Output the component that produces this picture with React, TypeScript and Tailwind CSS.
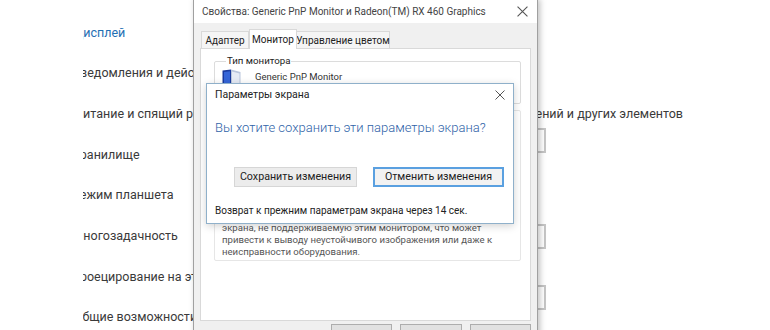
const font = { fontFamily: 'Roboto, "Noto Sans", sans-serif' };

const navItems = [
  { text: "ча", cut: 0, first: true },
  { text: "Дисплей", cut: 9.2, active: true },
  { text: "Уведомления и действия", cut: 10.6 },
  { text: "Питание и спящий режим", cut: 8.8 },
  { text: "Хранилище", cut: 11 },
  { text: "Режим планшета", cut: 11 },
  { text: "Многозадачность", cut: 10.6 },
  { text: "Проецирование на этот компьютер", cut: 12 },
  { text: "Общие возможности", cut: 9.2 },
];

function Chevron() {
  return (
    <svg width="11" height="6" viewBox="0 0 11 6" fill="none">
      <path d="M0.5 0.5 L5.5 5.5 L10.5 0.5" stroke="#8a8a8a" strokeWidth="1" />
    </svg>
  );
}

function Select() {
  return (
    <div className="flex h-[25px] w-[263px] items-center justify-end border-2 border-[#c6c6c6] pr-[6px]">
      <Chevron />
    </div>
  );
}

function SettingsPage() {
  return (
    <div className="flex">
      <div className="ml-[83px] w-[200px] shrink-0 overflow-hidden">
        <div className="mt-[-21px] flex flex-col">
          {navItems.map((item) => (
            <div
              key={item.text}
              className={`flex items-center whitespace-nowrap text-[12.5px] ${
                item.first ? "h-[33.7px]" : "h-[40.7px]"
              } ${item.active ? "text-[#1f70b4]" : "text-[#3a3a3a]"}`}
            >
              <span style={{ marginLeft: -item.cut }}>{item.text}</span>
            </div>
          ))}
        </div>
      </div>
      <div className="flex w-[400px] flex-col pt-[104px]">
        <div className="flex h-[20px] items-center justify-end text-[12.5px] text-[#3a3a3a]">
          <span className="shrink-0 whitespace-nowrap">
            Изменение размера текста, приложений и других элементов
          </span>
        </div>
        <div className="mt-[4px]">
          <Select />
        </div>
        <div className="mt-[71px]">
          <Select />
        </div>
        <div className="mt-[36px]">
          <Select />
        </div>
      </div>
    </div>
  );
}

function MonitorIcon() {
  return (
    <svg width="19" height="17" viewBox="0 0 19 17">
      <path d="M0.5 1.5 L9 0.5 L9 15.5 L0.5 16.5 Z" fill="#1a3a9e" />
      <path d="M2 3 L8 2.2 L8 14 L2 15 Z" fill="#3565d8" />
      <path d="M9 0.5 L18.5 3 L18.5 15.5 L9 15.5 Z" fill="#b9c5dc" />
      <path d="M10 2.5 L17.5 4.5 L17.5 14 L10 14 Z" fill="#e6ebf5" />
    </svg>
  );
}

function CloseX({ size = 10, color = "#444" }: { size?: number; color?: string }) {
  return (
    <svg width={size} height={size} viewBox="0 0 10 10">
      <path d="M0.5 0.5 L9.5 9.5 M9.5 0.5 L0.5 9.5" stroke={color} strokeWidth="1" />
    </svg>
  );
}

function PropertiesWindow() {
  return (
    <div className="absolute left-[193px] top-[-1px] flex h-[360px] w-[345px] flex-col border border-[#a0a0a0] bg-[#f0f0f0] shadow-[2px_0_6px_rgba(0,0,0,0.25)]">
      <div className="flex h-[23px] shrink-0 items-center justify-between whitespace-nowrap bg-white pl-[8px] pr-[9px]">
        <span className="text-[10px] text-[#444]">
          Свойства: Generic PnP Monitor и Radeon(TM) RX 460 Graphics
        </span>
        <CloseX size={11} color="#555" />
      </div>
      <div className="flex flex-col px-[6px]">
        <div className="mt-[6px] flex h-[19px] items-end whitespace-nowrap pl-[1px] text-[10px] text-[#222]">
          <div className="flex h-[17px] w-[48px] items-center justify-center border border-b-0 border-[#d9d9d9] bg-[#f5f5f5]">
            Адаптер
          </div>
          <div className="relative z-10 -mb-px flex h-[20px] w-[48px] items-center justify-center border border-b-0 border-[#d9d9d9] bg-white">
            Монитор
          </div>
          <div className="flex h-[17px] w-[93px] items-center justify-center border border-b-0 border-l-0 border-[#d9d9d9] bg-[#f5f5f5]">
            Управление цветом
          </div>
        </div>
        <div className="flex h-[273px] w-[331px] flex-col border border-[#d9d9d9] bg-white pl-[13px] pr-[9px] pt-[5px]">
          <fieldset className="h-[50px] rounded-[2px] border border-[#dcdcdc] px-[7px]">
            <legend className="ml-[4px] whitespace-nowrap px-[1px] text-[9.7px] leading-[14px] text-[#222]">
              Тип монитора
            </legend>
            <div className="mt-[1px] flex items-center gap-[14px]">
              <MonitorIcon />
              <span className="whitespace-nowrap text-[9.5px] text-[#333]">Generic PnP Monitor</span>
            </div>
          </fieldset>
          <div className="mt-[6px] flex h-[151px] flex-col justify-end rounded-[2px] border border-[#e6e6e6] px-[7px] pb-[2px]">
            <p className="whitespace-nowrap text-[9.6px] leading-[12px] text-[#555]">
              экрана, не поддерживаемую этим монитором, что может
              <br />
              привести к выводу неустойчивого изображения или даже к
              <br />
              неисправности оборудования.
            </p>
          </div>
        </div>
        <div className="mt-[3px] flex justify-end gap-[8px]">
          <div className="h-[23px] w-[61px] border border-[#adadad] bg-[#e1e1e1]" />
          <div className="h-[23px] w-[62px] border border-[#adadad] bg-[#e1e1e1]" />
          <div className="h-[23px] w-[61px] border border-[#adadad] bg-[#e1e1e1]" />
        </div>
      </div>
    </div>
  );
}

function ConfirmDialog() {
  return (
    <div className="absolute left-[206px] top-[83px] flex h-[141px] w-[308px] flex-col whitespace-nowrap border border-[#8fb0ca] bg-white shadow-[0_2px_8px_rgba(0,0,0,0.18)]">
      <div className="flex h-[22px] items-center justify-between pl-[8px] pr-[8px]">
        <span className="text-[10.5px] text-[#222]">Параметры экрана</span>
        <CloseX size={10} color="#555" />
      </div>
      <div className="mt-[12px] flex h-[20px] items-center pl-[8px] text-[13px] font-light text-[#2f63a8]">
        Вы хотите сохранить эти параметры экрана?
      </div>
      <div className="ml-[27px] mt-[29px] flex gap-[16px] text-[10.7px] text-[#222]">
        <div className="flex h-[20px] w-[123px] items-center justify-center border border-[#d6d6d6] bg-[#ececec]">
          Сохранить изменения
        </div>
        <div className="flex h-[20px] w-[131px] items-center justify-center border-2 border-[#5aa0e0] bg-[#f2f2f2]">
          Отменить изменения
        </div>
      </div>
      <div className="mt-[15px] flex h-[16px] items-center pl-[8px] text-[10px] text-[#222]">
        Возврат к прежним параметрам экрана через 14 сек.
      </div>
    </div>
  );
}

export default function App() {
  return (
    <div className="relative h-[330px] w-[770px] overflow-hidden bg-white" style={font}>
      <SettingsPage />
      <PropertiesWindow />
      <ConfirmDialog />
    </div>
  );
}
